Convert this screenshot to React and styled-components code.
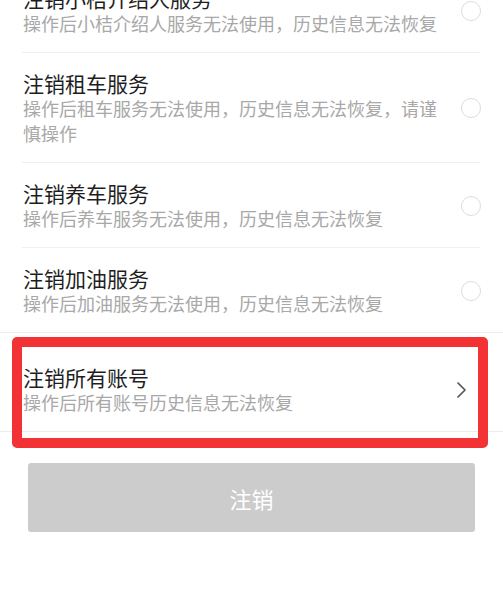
import styled, { createGlobalStyle } from 'styled-components';

const GlobalStyle = createGlobalStyle`
  html, body {
    margin: 0;
    padding: 0;
    background: #fff;
    overflow: hidden;
  }
  body {
    font-family: "Noto Sans CJK SC", "Noto Sans", sans-serif;
  }
`;

// 页面已向下滚动了一段，第一行被顶部裁掉
const Page = styled.div`
  width: 503px;
  height: 600px;
  overflow: hidden;
  background: #fff;
`;

const Scroller = styled.div`
  margin-top: -32px;
`;

const List = styled.div`
  display: flex;
  flex-direction: column;
`;

const Row = styled.div`
  position: relative;
  display: flex;
  align-items: center;
  gap: 16px;
  padding: 17px 22px 16px 23px;
  border-bottom: 1px solid ${(p) => (p.$full ? '#ececec' : 'transparent')};

  &::after {
    content: '';
    display: ${(p) => (p.$full ? 'none' : 'block')};
    position: absolute;
    left: 22px;
    right: 23px;
    bottom: -1px;
    height: 1px;
    background: #efefef;
  }
`;

const TextCol = styled.div`
  flex: 1;
  min-width: 0;
`;

const Title = styled.div`
  font-size: 21px;
  line-height: 26px;
  font-weight: 400;
  color: #1e1e1e;
`;

const Desc = styled.div`
  font-size: 18px;
  line-height: 25px;
  color: #a8a8a8;
`;

const Radio = styled.span`
  flex: none;
  width: 20px;
  height: 20px;
  box-sizing: border-box;
  border: 1px solid #dcdcdc;
  border-radius: 50%;
`;

const Highlighted = styled.div`
  position: relative;
  margin-top: 14px;
`;

// 截图上的红色标注框
const Marker = styled.div`
  position: absolute;
  left: 12px;
  right: 15px;
  top: -10px;
  bottom: -16px;
  border: 10px solid #f23234;
  border-radius: 5px;
  pointer-events: none;
`;

const Chevron = styled.svg`
  flex: none;
  width: 20px;
  height: 20px;
  margin-right: 12px;
`;

const Footer = styled.div`
  padding: 31px 28px 0 28px;
`;

const SubmitButton = styled.button`
  width: 100%;
  height: 69px;
  border: none;
  border-radius: 3px;
  background: #cccccc;
  color: #fff;
  font-family: "Noto Sans CJK SC", sans-serif;
  font-size: 22px;
  cursor: not-allowed;
`;

const services = [
  { id: 1, title: '注销小桔介绍人服务', desc: '操作后小桔介绍人服务无法使用，历史信息无法恢复' },
  { id: 2, title: '注销租车服务', desc: '操作后租车服务无法使用，历史信息无法恢复，请谨慎操作' },
  { id: 3, title: '注销养车服务', desc: '操作后养车服务无法使用，历史信息无法恢复' },
  { id: 4, title: '注销加油服务', desc: '操作后加油服务无法使用，历史信息无法恢复' },
];

export default function App() {
  return (
    <Page>
      <GlobalStyle />
      <Scroller>
        <List>
          {services.map((s, i) => (
            <Row key={s.id} $full={i === services.length - 1}>
              <TextCol>
                <Title>{s.title}</Title>
                <Desc>{s.desc}</Desc>
              </TextCol>
              <Radio />
            </Row>
          ))}
        </List>

        <Highlighted>
          <Row $full>
            <TextCol>
              <Title>注销所有账号</Title>
              <Desc>操作后所有账号历史信息无法恢复</Desc>
            </TextCol>
            <Chevron viewBox="0 0 20 20">
              <path d="M9 3 L16 10 L9 17" fill="none" stroke="#555" strokeWidth="1.7" strokeLinecap="round" strokeLinejoin="round" />
            </Chevron>
          </Row>
          <Marker />
        </Highlighted>

        <Footer>
          <SubmitButton disabled>注销</SubmitButton>
        </Footer>
      </Scroller>
    </Page>
  );
}
